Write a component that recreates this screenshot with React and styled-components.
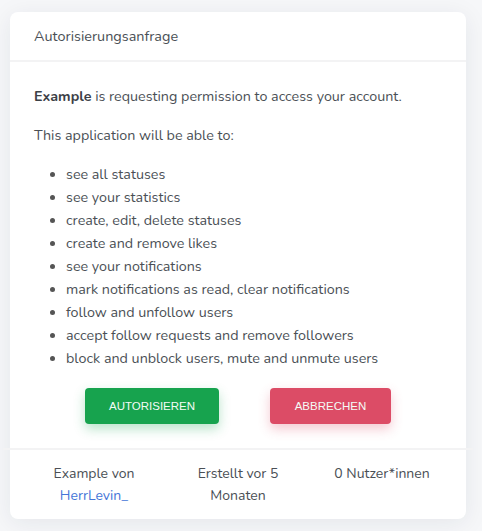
import React from 'react'
import styled, { createGlobalStyle } from 'styled-components'

const GlobalStyle = createGlobalStyle`
  html, body {
    margin: 0;
    padding: 0;
    background: #f6f7f9;
  }
  body {
    font-family: "Nunito", "Noto Sans", "Open Sans", sans-serif;
    color: #495057;
  }
`

const Page = styled.div`
  padding: 12px 16px 13px 10px;
`

const Card = styled.section`
  background: #fff;
  border-radius: 8px;
  box-shadow: 0 4px 24px rgba(30, 40, 60, 0.08);
`

const Header = styled.div`
  height: 48px;
  display: flex;
  align-items: center;
  padding: 0 24px;
  font-size: 14.4px;
  color: #4a4f55;
  border-bottom: 2px solid #f3f3f4;
`

const Body = styled.div`
  padding: 24px 24px 0;
  font-size: 14.3px;
  color: #4a4f55;
`

const Text = styled.p`
  margin: 0 0 ${p => p.$gap || 16}px;
  line-height: 21px;
  strong { font-weight: 700; color: #3c4046; }
`

const List = styled.ul`
  margin: 0;
  padding: 0 0 0 32px;
  list-style: disc;
  li {
    line-height: 23px;
  }
  li::marker {
    color: #555;
  }
`

const Actions = styled.div`
  display: flex;
  justify-content: center;
  gap: 51px;
  padding: 18px 0 24px;
`

const Button = styled.button`
  height: 36px;
  width: ${p => p.$w}px;
  border: 0;
  border-radius: 4px;
  font-family: "Liberation Sans", Arial, sans-serif;
  font-size: 11.5px;
  text-transform: uppercase;
  color: #f4fbf6;
  background: ${p => p.$bg};
  box-shadow: 0 5px 12px ${p => p.$glow};
  cursor: pointer;
`

const Divider = styled.hr`
  margin: 0 -7px;
  border: 0;
  border-top: 2px solid #f3f3f4;
`

const Footer = styled.div`
  display: grid;
  grid-template-columns: repeat(3, 1fr);
  padding: 13px 12px 12px;
  font-size: 14px;
  color: #4a4f55;
  text-align: center;
  line-height: 22px;
`

const Col = styled.div`
  padding: 0 6px;
`

const UserLink = styled.a`
  color: #4576d8;
  text-decoration: none;
`

const scopes = [
  'see all statuses',
  'see your statistics',
  'create, edit, delete statuses',
  'create and remove likes',
  'see your notifications',
  'mark notifications as read, clear notifications',
  'follow and unfollow users',
  'accept follow requests and remove followers',
  'block and unblock users, mute and unmute users',
]

export default function App() {
  return (
    <Page>
      <GlobalStyle />
      <Card>
        <Header>Autorisierungsanfrage</Header>
        <Body>
          <Text $gap={18}><strong>Example</strong> is requesting permission to access your account.</Text>
          <Text $gap={17}>This application will be able to:</Text>
          <List>
            {scopes.map(s => <li key={s}>{s}</li>)}
          </List>
          <Actions>
            <Button $w={134} $bg="#17a34e" $glow="rgba(23, 163, 78, 0.3)">Autorisieren</Button>
            <Button $w={121} $bg="#dc4c66" $glow="rgba(220, 76, 102, 0.3)">Abbrechen</Button>
          </Actions>
        </Body>
        <Divider />
        <Footer>
          <Col>Example von<br /><UserLink href="#">HerrLevin_</UserLink></Col>
          <Col>Erstellt vor 5 Monaten</Col>
          <Col>0 Nutzer*innen</Col>
        </Footer>
      </Card>
    </Page>
  )
}
